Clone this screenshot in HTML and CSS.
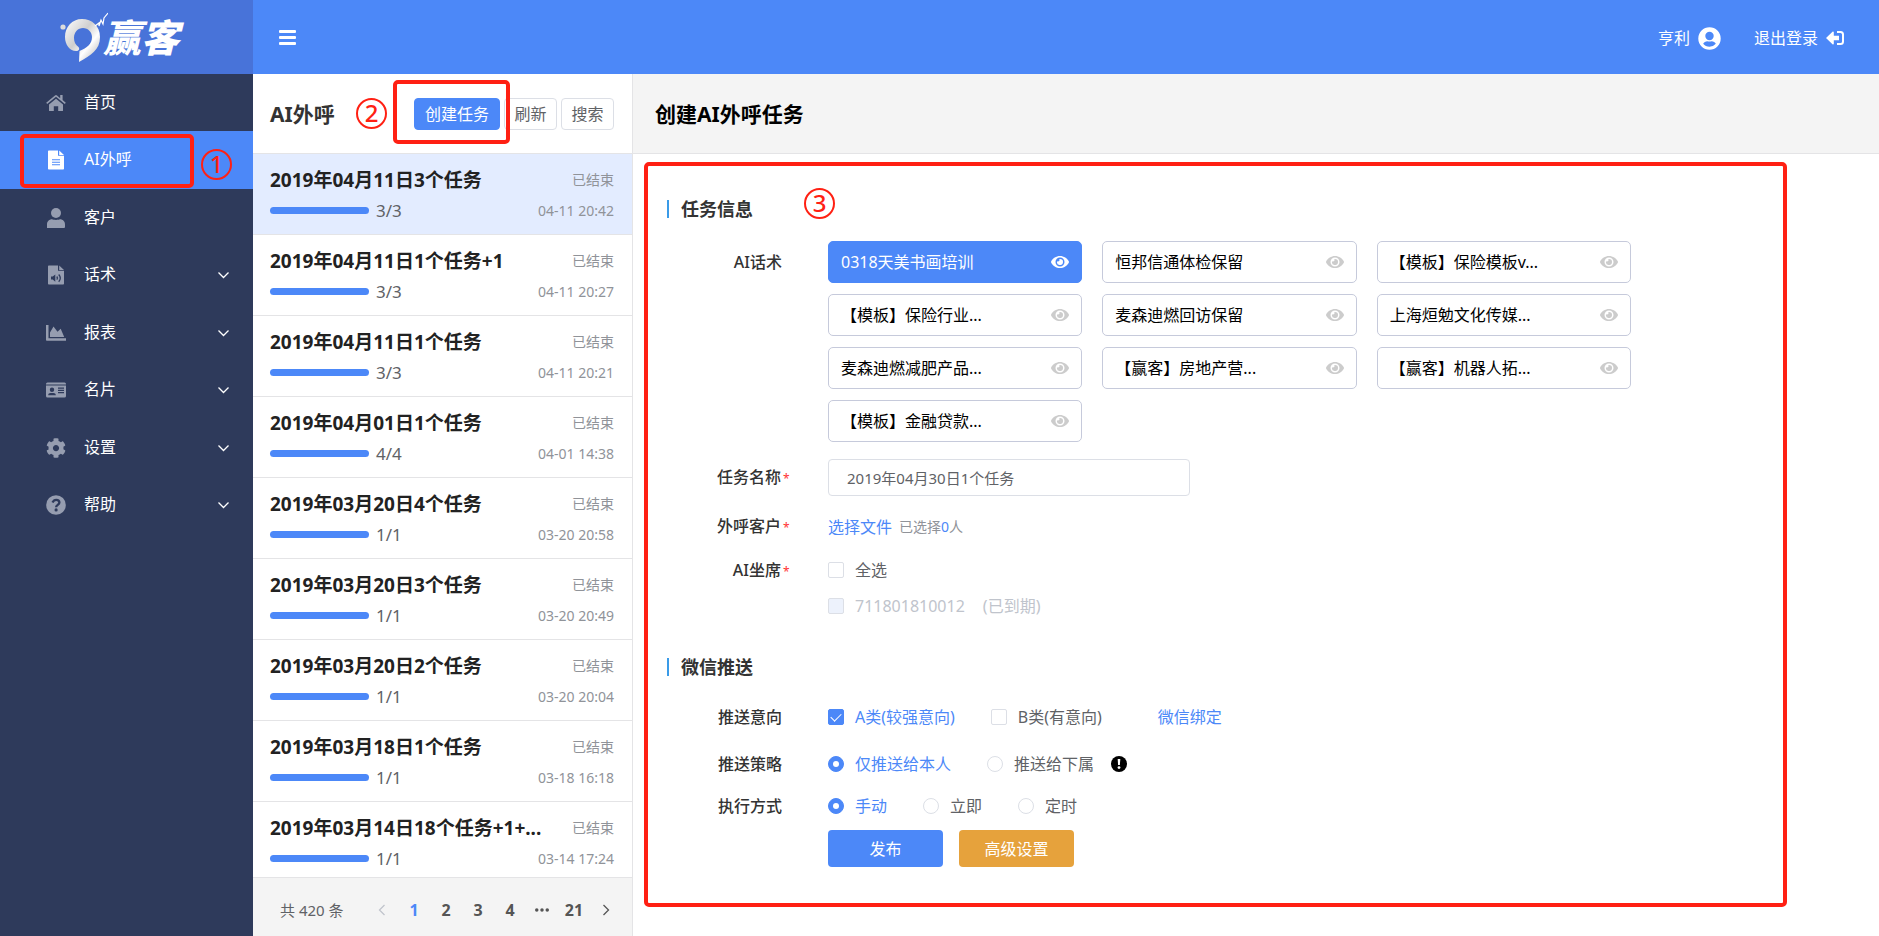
FILE: index.html
```
<!DOCTYPE html>
<html lang="zh-CN">
<head>
<meta charset="utf-8">
<title>创建AI外呼任务</title>
<link rel="stylesheet" href="styles.css">
</head>
<body>
<svg class="sprite" aria-hidden="true">
  <symbol id="eye" viewBox="0 0 576 512"><path fill="currentColor" d="M572.52 241.4C518.29 135.59 410.93 64 288 64S57.68 135.64 3.48 241.41a32.35 32.35 0 0 0 0 29.19C57.71 376.41 165.07 448 288 448s230.32-71.64 284.52-177.41a32.35 32.35 0 0 0 0-29.19zM288 400a144 144 0 1 1 144-144 143.93 143.93 0 0 1-144 144zm0-240a95.31 95.31 0 0 0-25.31 3.79 47.85 47.85 0 0 1-66.9 66.9A95.78 95.78 0 1 0 288 160z"/></symbol>
  <symbol id="chevron" viewBox="0 0 12 12"><path fill="none" stroke="currentColor" stroke-width="1.3" d="M1 3.5l5 5 5-5"/></symbol>
</svg>
<div class="app">
  <aside class="sidebar">
    <a class="logo" href="#" aria-label="赢客">
      <svg class="logo-mark" viewBox="0 0 48 50" aria-hidden="true">
        <defs><linearGradient id="silver" x1="0" y1="0" x2="1" y2="1"><stop offset="0" stop-color="#fff"/><stop offset=".42" stop-color="#cfcfcf"/><stop offset=".65" stop-color="#fff"/><stop offset="1" stop-color="#aaa"/></linearGradient></defs>
        <circle cx="3" cy="15" r="2.6" fill="#dcdcdc"/>
        <path fill="url(#silver)" fill-rule="evenodd" d="M22 7C12 7 5 15 5 25c0 8 5 14 11 14 3 0 4-2 2.500-4-3-2-4.500-5-4.500-9 0-6 4-10 9-10s9 4 9 9c0 7-5 11-12.500 14l-.5 11C31 43 40 38 40 25 40 14 32 7 22 7z"/>
        <path fill="none" stroke="#fff" stroke-width="1.200" d="M35 14l4-3 0 3 2-6 2 4 1-6 4-5"/>
      </svg>
      <span class="logo-text">赢客</span>
    </a>
    <nav>
      <ul class="menu">
        <li><a href="#"><svg class="menu-icon" viewBox="0 0 20 20"><path fill="currentColor" d="M10 5.800l-7 5.700v6a.6.6 0 0 0 .6.6h4.200v-4.900h4.400v4.900h4.200a.6.6 0 0 0 .6-.6v-6zM19.800 9.700l-3.200-2.600V2h-2.400v3.200L11 2.500a1.600 1.600 0 0 0-2 0L.2 9.700l1 1.200L10 3.800l8.800 7.100z"/></svg><span>首页</span></a></li>
        <li class="active"><a href="#"><svg class="menu-icon" viewBox="0 0 20 20"><path fill="currentColor" fill-rule="evenodd" d="M3 .5h9v5.300h6v12.900a.8.8 0 0 1-.8.800H2.800a.8.8 0 0 1-.8-.8V1.300A.8.8 0 0 1 2.800.5zM6 9.200v1.100h8V9.200zm0 2.500v1.100h8v-1.100zm0 2.500v1.100h8v-1.100zM13.200.5L18 5h-4.800z"/></svg><span>AI外呼</span></a></li>
        <li><a href="#"><svg class="menu-icon" viewBox="0 0 20 20"><circle cx="10" cy="5" r="5" fill="currentColor"/><path fill="currentColor" d="M1 20v-3.500c0-3 2.200-5.200 5-5.200 1.300.8 6.700.8 8 0 2.800 0 5 2.200 5 5.200V19a1 1 0 0 1-1 1z"/></svg><span>客户</span></a></li>
        <li><a href="#"><svg class="menu-icon" viewBox="0 0 20 20"><path fill="currentColor" fill-rule="evenodd" d="M3 .5h9v5.300h6v12.900a.8.8 0 0 1-.8.800H2.800a.8.8 0 0 1-.8-.8V1.300A.8.8 0 0 1 2.800.5zM5 11.600v3h1.700l2.600 2.200V9.400l-2.600 2.200zM13.200.5L18 5h-4.800z"/><path fill="none" stroke="#2e3a5b" stroke-width="1.300" d="M10.800 11.500q1.300 1.600 0 3.200M12.700 9.500q3.200 3.600 0 7.200"/></svg><span>话术</span><svg class="chevron"><use href="#chevron"/></svg></a></li>
        <li><a href="#"><svg class="menu-icon" viewBox="0 0 20 20"><path fill="currentColor" d="M0 2h2.500v13.200H20v2.500H.8a.8.8 0 0 1-.8-.8zM4 14V9.500l3.500-6 4 5.300 3.200-3L18.200 14z"/></svg><span>报表</span><svg class="chevron"><use href="#chevron"/></svg></a></li>
        <li><a href="#"><svg class="menu-icon" viewBox="0 0 20 20"><path fill="currentColor" fill-rule="evenodd" d="M1.500 2.500h17A1.500 1.500 0 0 1 20 4v.4H0V4a1.500 1.500 0 0 1 1.500-1.500zM0 5.400h20v10.700a1.500 1.500 0 0 1-1.500 1.500h-17A1.500 1.500 0 0 1 0 16.100zM6 7.600a2.200 2.200 0 1 0 0 4.400 2.200 2.200 0 0 0 0-4.400zM2.200 15.200h7.600c0-1.500-1-2.300-2.300-2.300h-3c-1.300 0-2.300.8-2.300 2.300zM12 7.500v1.200h6V7.500zm0 2.300V11h6V9.800zm0 2.300v1.200h6v-1.200z"/></svg><span>名片</span><svg class="chevron"><use href="#chevron"/></svg></a></li>
        <li><a href="#"><svg class="menu-icon" viewBox="0 0 512 512"><path fill="currentColor" d="M487.400 315.700l-42.600-24.600c4.300-23.200 4.300-47 0-70.200l42.600-24.600c4.900-2.800 7.100-8.600 5.500-14-11.100-35.600-30-67.800-54.700-94.600-3.800-4.100-10-5.100-14.800-2.300L380.800 110c-17.900-15.400-38.500-27.300-60.800-35.100V25.800c0-5.600-3.900-10.500-9.400-11.700-36.700-8.200-74.300-7.800-109.200 0-5.500 1.200-9.400 6.100-9.400 11.700V75c-22.200 7.900-42.800 19.800-60.800 35.100L88.700 85.500c-4.900-2.800-11-1.900-14.800 2.300-24.700 26.700-43.600 58.900-54.700 94.600-1.700 5.400.6 11.200 5.500 14L67.300 221c-4.300 23.200-4.300 47 0 70.200l-42.600 24.600c-4.900 2.800-7.100 8.600-5.500 14 11.100 35.600 30 67.800 54.700 94.600 3.800 4.100 10 5.100 14.800 2.300l42.600-24.600c17.900 15.400 38.500 27.300 60.800 35.100v49.200c0 5.600 3.900 10.500 9.400 11.700 36.700 8.200 74.300 7.800 109.200 0 5.500-1.200 9.400-6.100 9.400-11.700v-49.200c22.200-7.900 42.800-19.800 60.800-35.100l42.600 24.600c4.900 2.800 11 1.900 14.800-2.300 24.700-26.700 43.600-58.900 54.700-94.600 1.500-5.500-.7-11.300-5.600-14.100zM256 336c-44.100 0-80-35.900-80-80s35.900-80 80-80 80 35.900 80 80-35.900 80-80 80z"/></svg><span>设置</span><svg class="chevron"><use href="#chevron"/></svg></a></li>
        <li><a href="#"><svg class="menu-icon" viewBox="0 0 20 20"><circle cx="10" cy="10" r="9.800" fill="currentColor"/><path fill="none" stroke="#2e3a5b" stroke-width="2.300" d="M6.500 7.600C7.500 5.500 8.700 4.900 10.200 4.900c1.900 0 3.200 1.100 3.200 2.700 0 2.200-3.300 2.300-3.300 4.600"/><circle cx="10.100" cy="14.900" r="1.600" fill="#2e3a5b"/></svg><span>帮助</span><svg class="chevron"><use href="#chevron"/></svg></a></li>
      </ul>
    </nav>
    <div class="mark mark-menu"></div><div class="num num-1">1</div>
  </aside>

  <div class="main">
    <header class="topbar">
      <button class="burger" type="button" aria-label="菜单"><i></i><i></i><i></i></button>
      <div class="user">
        <a href="#">亨利<svg class="avatar" viewBox="0 0 24 24"><path fill="currentColor" fill-rule="evenodd" d="M12 .3a11.700 11.700 0 1 0 0 23.400A11.700 11.700 0 0 0 12 .3zM12 5a4.400 4.400 0 1 1 0 8.800A4.400 4.400 0 0 1 12 5zm0 15.500c-2.700 0-5-1.200-6.600-3.100.8-1.600 2.500-2.600 4.300-2.600 1.500.5 3.100.5 4.600 0 1.800 0 3.500 1 4.300 2.600A8.600 8.600 0 0 1 12 20.500z"/></svg></a>
        <a href="#">退出登录<svg class="logout" viewBox="0 0 18 16"><path fill="currentColor" d="M0 8l6.500-6.300c.6-.5 1.300-.2 1.300.5v3.500H13v4.600H7.800v3.500c0 .7-.7 1-1.300.5z"/><path fill="none" stroke="currentColor" stroke-width="2" d="M11 2h3.500A2.500 2.500 0 0 1 17 4.500v7a2.500 2.500 0 0 1-2.500 2.500H11"/></svg></a>
      </div>
    </header>

    <div class="content">
      <section class="tasks">
        <div class="tasks-head">
          <h2>AI外呼</h2>
          <div class="tools">
            <button class="btn primary" type="button">创建任务</button>
            <button class="btn" type="button">刷新</button>
            <button class="btn" type="button">搜索</button>
          </div>
          <div class="mark mark-create"></div><div class="num num-2">2</div>
        </div>
        <ul class="task-list">
          <li class="selected"><h3>2019年04月11日3个任务</h3><span class="state">已结束</span><div class="progress"><b></b>3/3</div><time>04-11 20:42</time></li>
          <li><h3>2019年04月11日1个任务+1</h3><span class="state">已结束</span><div class="progress"><b></b>3/3</div><time>04-11 20:27</time></li>
          <li><h3>2019年04月11日1个任务</h3><span class="state">已结束</span><div class="progress"><b></b>3/3</div><time>04-11 20:21</time></li>
          <li><h3>2019年04月01日1个任务</h3><span class="state">已结束</span><div class="progress"><b></b>4/4</div><time>04-01 14:38</time></li>
          <li><h3>2019年03月20日4个任务</h3><span class="state">已结束</span><div class="progress"><b></b>1/1</div><time>03-20 20:58</time></li>
          <li><h3>2019年03月20日3个任务</h3><span class="state">已结束</span><div class="progress"><b></b>1/1</div><time>03-20 20:49</time></li>
          <li><h3>2019年03月20日2个任务</h3><span class="state">已结束</span><div class="progress"><b></b>1/1</div><time>03-20 20:04</time></li>
          <li><h3>2019年03月18日1个任务</h3><span class="state">已结束</span><div class="progress"><b></b>1/1</div><time>03-18 16:18</time></li>
          <li><h3>2019年03月14日18个任务+1+...</h3><span class="state">已结束</span><div class="progress"><b></b>1/1</div><time>03-14 17:24</time></li>
        </ul>
        <nav class="pager">
          <span class="total">共 420 条</span>
          <button type="button" disabled aria-label="上一页"><svg class="prev"><use href="#chevron"/></svg></button>
          <button type="button" class="current">1</button>
          <button type="button">2</button>
          <button type="button">3</button>
          <button type="button">4</button>
          <button type="button" aria-label="更多"><svg class="more" viewBox="0 0 16 4"><path fill="currentColor" d="M2 0a2 2 0 1 0 0 4 2 2 0 0 0 0-4zm6 0a2 2 0 1 0 0 4 2 2 0 0 0 0-4zm6 0a2 2 0 1 0 0 4 2 2 0 0 0 0-4z"/></svg></button>
          <button type="button">21</button>
          <button type="button" aria-label="下一页"><svg class="next"><use href="#chevron"/></svg></button>
        </nav>
      </section>

      <main class="detail">
        <header class="detail-head"><h1>创建AI外呼任务</h1></header>
        <form class="form">
          <h2 class="section">任务信息</h2>
          <div class="row row-scripts">
            <span class="label">AI话术</span>
            <div class="scripts">
              <button type="button" class="chosen"><span>0318天美书画培训</span><svg><use href="#eye"/></svg></button>
              <button type="button"><span>恒邦信通体检保留</span><svg><use href="#eye"/></svg></button>
              <button type="button"><span>【模板】保险模板v...</span><svg><use href="#eye"/></svg></button>
              <button type="button"><span>【模板】保险行业...</span><svg><use href="#eye"/></svg></button>
              <button type="button"><span>麦森迪燃回访保留</span><svg><use href="#eye"/></svg></button>
              <button type="button"><span>上海烜勉文化传媒...</span><svg><use href="#eye"/></svg></button>
              <button type="button"><span>麦森迪燃减肥产品...</span><svg><use href="#eye"/></svg></button>
              <button type="button"><span>【赢客】房地产营...</span><svg><use href="#eye"/></svg></button>
              <button type="button"><span>【赢客】机器人拓...</span><svg><use href="#eye"/></svg></button>
              <button type="button"><span>【模板】金融贷款...</span><svg><use href="#eye"/></svg></button>
            </div>
          </div>
          <div class="row row-name">
            <label class="label required" for="task-name">任务名称</label>
            <input class="text" id="task-name" type="text" value="2019年04月30日1个任务">
          </div>
          <div class="row row-customers">
            <span class="label required">外呼客户</span>
            <div class="files"><a href="#">选择文件</a><span class="count">已选择<em>0</em>人</span></div>
          </div>
          <div class="row row-seats">
            <span class="label required">AI坐席</span>
            <div class="seats">
              <label class="choice"><input type="checkbox">全选</label>
              <label class="choice off"><input type="checkbox" disabled>711801810012<span>(已到期)</span></label>
            </div>
          </div>

          <h2 class="section">微信推送</h2>
          <div class="row row-intent">
            <span class="label">推送意向</span>
            <div class="choices">
              <label class="choice"><input type="checkbox" checked>A类(较强意向)</label>
              <label class="choice"><input type="checkbox">B类(有意向)</label>
              <a class="bind" href="#">微信绑定</a>
            </div>
          </div>
          <div class="row row-policy">
            <span class="label">推送策略</span>
            <div class="choices">
              <label class="choice"><input type="radio" name="policy" checked>仅推送给本人</label>
              <label class="choice"><input type="radio" name="policy">推送给下属</label>
              <svg class="warn" viewBox="0 0 16 16"><circle cx="8" cy="8" r="8"/><path fill="#fff" d="M6.700 3h2.600l-.4 6H7.100z"/><circle cx="8" cy="11.600" r="1.400" fill="#fff"/></svg>
            </div>
          </div>
          <div class="row row-mode">
            <span class="label">执行方式</span>
            <div class="choices">
              <label class="choice"><input type="radio" name="mode" checked>手动</label>
              <label class="choice"><input type="radio" name="mode">立即</label>
              <label class="choice"><input type="radio" name="mode">定时</label>
            </div>
          </div>
          <div class="actions">
            <button type="submit">发布</button>
            <button type="button" class="advanced">高级设置</button>
          </div>
        </form>
        <div class="mark mark-form"></div><div class="num num-3">3</div>
      </main>
    </div>
  </div>
</div>
</body>
</html>
```
FILE: styles.css
```
* { box-sizing: border-box; }
body {
  margin: 0;
  font: 16px/24px "Noto Sans", "Noto Sans CJK SC", sans-serif;
  color: #606266;
  background: #fff;
}
h1, h2, h3, ul { margin: 0; padding: 0; }
ul { list-style: none; }
a { color: inherit; text-decoration: none; }
button, input { font: inherit; color: inherit; margin: 0; }
button { padding: 0; border: 0; background: none; cursor: pointer; }
svg { display: block; flex: none; }
.sprite { position: absolute; width: 0; height: 0; }

.app { display: flex; height: 100vh; }
.main { flex: 1; min-width: 0; display: flex; flex-direction: column; }
.content { flex: 1; min-height: 0; display: flex; }

/* Sidebar */
.sidebar { position: relative; flex: none; width: 253px; background: #2e3a5b; color: #fff; }
.logo {
  display: flex;
  align-items: center;
  height: 74px;
  padding-left: 60px;
  background: #4873d9;
}
.logo-mark { width: 48px; height: 50px; }
.logo-text {
  margin-left: -5px;
  font-size: 38px;
  line-height: 50px;
  font-weight: 900;
  font-style: italic;
}
.menu a { display: flex; align-items: center; height: 57px; padding: 0 23px 0 46px; }
.menu li:nth-child(even) a { height: 58px; }
.menu .active { background: #4c88f8; }
.menu span { flex: 1; padding: 0 0 2px 18px; }
.menu-icon { width: 20px; height: 20px; color: #969db0; }
.active .menu-icon { color: #fff; }
.chevron { width: 13px; height: 12px; }

/* Top bar */
.topbar {
  flex: none;
  display: flex;
  align-items: center;
  justify-content: space-between;
  height: 74px;
  padding: 0 35px 0 26px;
  background: #4c88f8;
  color: #fff;
}
.burger { display: grid; gap: 3px; width: 17px; }
.burger i { height: 3px; border-radius: 1px; background: #fff; }
.user { display: flex; gap: 33px; padding-top: 2px; }
.user a { display: flex; align-items: center; gap: 8px; }
.avatar { width: 23px; height: 23px; }
.logout { width: 18px; height: 16px; }

/* Task list */
.tasks { flex: none; width: 380px; display: flex; flex-direction: column; border-right: 1px solid #e4e4e6; }
.tasks-head {
  position: relative;
  flex: none;
  display: flex;
  align-items: center;
  justify-content: space-between;
  height: 80px;
  padding: 0 18px 0 17px;
  border-bottom: 1px solid #e4e4e6;
}
.tasks-head h2 { font-size: 21px; color: #333; }
.tools { display: flex; gap: 4px; }
.btn { min-width: 53px; height: 32px; padding: 0 9px; border: 1px solid #dcdfe6; border-radius: 4px; line-height: 24px; }
.btn.primary { padding: 0 10px; border-color: #4c88f8; background: #4c88f8; color: #fff; }
.task-list { flex: 1; min-height: 0; overflow: hidden; }
.task-list li {
  display: grid;
  grid-template-columns: minmax(0, 1fr) auto;
  align-content: center;
  align-items: center;
  height: 81px;
  padding: 1px 18px 0 17px;
  border-bottom: 1px solid #e4e4e6;
  row-gap: 6px;
  white-space: nowrap;
}
.task-list .selected { background: #e3ecff; }
.task-list h3 { font-size: 19px; line-height: 26px; color: #222; }
.state, .task-list time { font-size: 14px; color: #909399; text-align: right; }
.progress { display: flex; align-items: center; gap: 7px; font-size: 17px; }
.progress b { width: 99px; height: 7px; border-radius: 4px; background: #4c88f8; }
.pager {
  flex: none;
  display: flex;
  align-items: center;
  height: 59px;
  padding: 6px 10px 0 27px;
  border-top: 1px solid #e4e4e6;
  background: #f4f4f4;
  font-weight: 700;
  color: #555;
}
.pager .total { flex: 1; font-size: 15px; font-weight: 400; color: #606266; }
.pager button { width: 32px; height: 32px; display: grid; place-items: center; }
.pager .current { color: #4c88f8; }
.pager svg { width: 12px; height: 12px; }
.pager .more { width: 14px; height: 4px; }
.pager button:disabled { color: #c0c4cc; }
.prev { transform: rotate(90deg); }
.next { transform: rotate(-90deg); }

/* Detail */
.detail { position: relative; flex: 1; min-width: 0; }
.detail-head {
  display: flex;
  align-items: center;
  height: 80px;
  padding-left: 22px;
  border-bottom: 1px solid #e4e4e6;
  background: #f4f4f4;
}
.detail-head h1 { font-size: 21px; line-height: 28px; color: #000; }
.form { padding: 43px 34px 0; }
.section { display: flex; align-items: center; gap: 12px; font-size: 18px; line-height: 24px; color: #333; }
.section::before { content: ""; width: 2px; height: 18px; background: #3a9be8; }
.row { display: flex; }
.label { flex: none; width: 125px; margin-right: 36px; padding-right: 10px; text-align: right; font-weight: 500; color: #333; }
.label.required { padding-right: 0; }
.required::after { content: "*"; display: inline-block; width: 9px; padding-left: 2px; text-align: left; font-size: 12px; font-weight: 400; color: #f33; }
.row-scripts { padding-top: 20px; }
.row-scripts .label { line-height: 42px; }
.scripts { flex: 1; max-width: 803px; display: grid; grid-template-columns: repeat(3, 1fr); gap: 11px 20px; }
.scripts button {
  display: flex;
  align-items: center;
  justify-content: space-between;
  height: 42px;
  padding: 0 12px;
  border: 1px solid #c6cadb;
  border-radius: 5px;
  color: #000;
}
.scripts svg { width: 18px; height: 16px; color: #ccc; }
.scripts .chosen { border-color: #4c88f8; background: #4c88f8; color: #fff; }
.scripts .chosen svg { color: #fff; }
.row-name { padding-top: 17px; }
.row-name .label { line-height: 37px; }
.text { width: 362px; height: 37px; padding: 0 18px; border: 1px solid #dcdfe6; border-radius: 4px; font-size: 15px; }
.row-customers { padding-top: 17px; }
.files { display: flex; align-items: center; gap: 7px; }
.files a, .bind { color: #4c88f8; }
.count { font-size: 14px; color: #909399; }
.count em { font-style: normal; color: #4c88f8; }
.row-seats { padding-top: 18px; }
.seats { display: grid; gap: 12px; }
.choice { display: flex; align-items: center; }
.choice input {
  appearance: none;
  width: 16px;
  height: 16px;
  margin-right: 11px;
  border: 1px solid #dcdfe6;
  border-radius: 2px;
  background: #fff;
}
.choice input[type="radio"] { border-radius: 50%; }
.choice input:checked { display: grid; place-items: center; border-color: #4c88f8; background-color: #4c88f8; }
.choice input:checked::before { content: ""; width: 6px; height: 6px; border-radius: 50%; background: #fff; }
.choice input[type="checkbox"]:checked::before {
  width: 5px;
  height: 9px;
  margin-bottom: 2px;
  border: solid #fff;
  border-width: 0 1px 1px 0;
  border-radius: 0;
  background: none;
  transform: rotate(45deg);
}
.choice:has(:checked) { color: #4c88f8; }
.choice.off { color: #c0c4cc; }
.choice.off input { background-color: #edf2fc; }
.off span { padding-left: 18px; }
.row-seats + .section { margin-top: 37px; }
.row-intent { padding-top: 26px; }
.row-policy { padding-top: 23px; }
.row-mode { padding-top: 18px; }
.choices { display: flex; align-items: center; gap: 36px; }
.bind { margin-left: 20px; }
.warn { width: 16px; height: 16px; margin-left: -19px; }
.actions { display: flex; gap: 16px; padding: 12px 0 0 161px; }
.actions button { width: 115px; height: 37px; border-radius: 4px; background: #4c88f8; color: #fff; }
.actions .advanced { background: #e6a23c; }

/* Guide marks laid over the page */
.mark { position: absolute; border: 4px solid #ff2013; border-radius: 5px; pointer-events: none; }
.mark-menu { left: 20px; top: 134px; width: 174px; height: 54px; }
.mark-create { left: 140px; top: 6px; width: 117px; height: 64px; }
.mark-form { left: 11px; right: 92px; top: 88px; bottom: 29px; }
.num {
  position: absolute;
  width: 31px;
  height: 31px;
  border: 2px solid #ff2013;
  border-radius: 50%;
  font-size: 24px;
  line-height: 26px;
  font-weight: 500;
  text-align: center;
  color: #ff2013;
}
.num-1 { left: 201px; top: 149px; }
.num-2 { left: 103px; top: 24px; }
.num-3 { left: 171px; top: 114px; }
```
